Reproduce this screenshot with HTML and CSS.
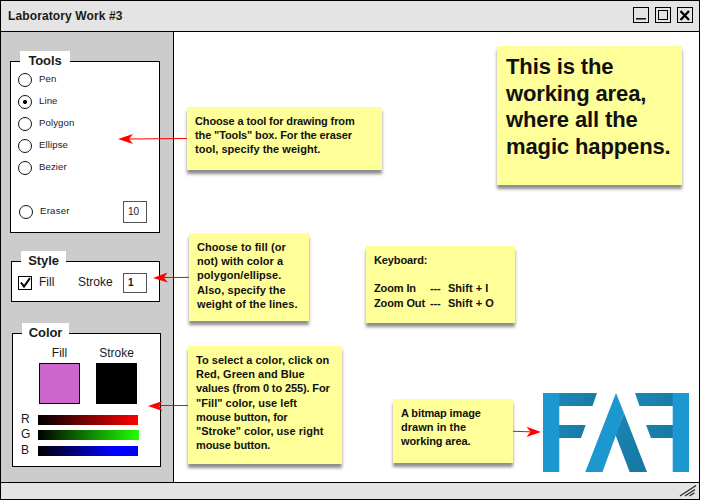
FILE: index.html
```html
<!DOCTYPE html>
<html lang="en">
<head>
<meta charset="utf-8">
<title>Laboratory Work #3</title>
<link rel="stylesheet" href="styles.css">
</head>
<body>
<div class="window">
  <header class="titlebar">
    <h1 class="title">Laboratory Work #3</h1>
    <div class="controls">
      <svg width="16" height="16" viewBox="0 0 16 16"><rect class="frame" x=".5" y=".5" width="15" height="15"/><path class="thick" d="M3 11.800h10"/></svg>
      <svg width="16" height="16" viewBox="0 0 16 16"><rect class="frame" x=".5" y=".5" width="15" height="15"/><rect class="frame" x="3.5" y="3.5" width="9" height="9"/></svg>
      <svg width="16" height="16" viewBox="0 0 16 16"><rect class="frame" x=".5" y=".5" width="15" height="15"/><path class="cross" d="M3.500 4l8.500 9M12 4l-8.500 9"/></svg>
    </div>
  </header>
  <div class="body">
    <aside class="sidebar">
      <section class="panel tools">
        <h2 class="legend">Tools</h2>
        <div class="row"><span class="radio"></span><span class="label">Pen</span></div>
        <div class="row"><span class="radio on"></span><span class="label">Line</span></div>
        <div class="row"><span class="radio"></span><span class="label">Polygon</span></div>
        <div class="row"><span class="radio"></span><span class="label">Ellipse</span></div>
        <div class="row"><span class="radio"></span><span class="label">Bezier</span></div>
        <div class="row eraser"><span class="radio"></span><span class="label">Eraser</span><span class="field">10</span></div>
      </section>
      <section class="panel style">
        <h2 class="legend">Style</h2>
        <div class="style-row">
          <svg class="check" width="14" height="14" viewBox="0 0 14 14"><rect class="frame" x=".5" y=".5" width="13" height="13"/><path d="M3 6.500L6 10.500L12 2.200" fill="none" stroke="#000" stroke-width="2"/></svg>
          <span class="fill-label">Fill</span>
          <span class="stroke-label">Stroke</span>
          <span class="field short">1</span>
        </div>
      </section>
      <section class="panel color">
        <h2 class="legend">Color</h2>
        <div class="swatches">
          <div class="swatch-col"><span>Fill</span><i class="swatch pink"></i></div>
          <div class="swatch-col"><span>Stroke</span><i class="swatch black"></i></div>
        </div>
        <div class="channel red"><span>R</span><i></i></div>
        <div class="channel green"><span>G</span><i></i></div>
        <div class="channel blue"><span>B</span><i></i></div>
      </section>
    </aside>
    <main class="canvas"></main>
  </div>
  <footer class="statusbar">
    <svg width="18" height="12" viewBox="0 0 18 12"><path d="M1 11L17 .5M6 11L16 4.500M10.500 11L15.500 7.800" fill="none" stroke="#222" stroke-width="1.200"/></svg>
  </footer>

  <div class="note big">This is the<br>working area,<br>where all the<br>magic happens.</div>
  <div class="note n-tools">Choose a tool for drawing from<br>the "Tools" box. For the eraser<br><span class="loose">tool, specify the weight.</span></div>
  <div class="note n-style">Choose to fill (or<br>not) with color a<br>polygon/ellipse.<br>Also, specify the<br>weight of the lines.</div>
  <div class="note n-keys">Keyboard:<br><br>
    <div class="keys"><span>Zoom In</span><span>---</span><span class="loose">Shift + I</span><span>Zoom Out</span><span>---</span><span class="loose">Shift + O</span></div>
  </div>
  <div class="note n-color"><span class="loose">To select a color, click on</span><br><span class="loose">Red, Green and Blue</span><br>values (from 0 to 255). For<br><span class="loose">"Fill" color, use left</span><br>mouse button, for<br><span class="loose">"Stroke" color, use right</span><br>mouse button.</div>
  <div class="note n-image">A bitmap image<br><span class="loose">drawn in the</span><br>working area.</div>

  <svg class="overlay" width="700" height="500" viewBox="0 0 700 500">
    <defs>
      <linearGradient id="bar" x1="0" y1="0" x2="1" y2="0.400"><stop offset="0" stop-color="#1b86b8"/><stop offset="1" stop-color="#187aa6"/></linearGradient>
      <linearGradient id="leg" x1="0" y1="0" x2="0.500" y2="1"><stop offset="0" stop-color="#1b86b6"/><stop offset="1" stop-color="#1878a4"/></linearGradient>
    </defs>
    <g stroke="#f00" stroke-width="1">
      <path d="M128 139L187 138.500M163 277.500L189 277.400M158 405.500L188 405.500M513 431.300L530 431.800"/>
    </g>
    <g fill="#f00">
      <path d="M118 139L133 134L129 139L133 144Z"/>
      <path d="M153 278L167.500 272.500L164 277.700L168 282.500Z"/>
      <path d="M148 406L162.500 401L159 405.700L162.500 411Z"/>
      <path d="M541 432L526.500 426.700L530.500 431.800L526.500 437Z"/>
    </g>
    <g>
      <path fill="url(#bar)" d="M559 393H597L592.500 406H559ZM559 425H585.700L581 438H559Z"/>
      <path fill="url(#bar)" d="M635 393H673V406H639.500ZM646 425H673V438H651Z"/>
      <path fill="url(#leg)" d="M624 413L647 472H629.700L615.500 435Z"/>
      <path fill="#1d97cf" d="M543 393H559.300V472H543ZM672.700 393H689V472H672.700ZM616 393L624 413L602.500 472H585.300Z"/>
    </g>
  </svg>
</div>
</body>
</html>
```
FILE: styles.css
```css
* { box-sizing: border-box; }
body {
  margin: 0;
  background: #fff;
  color: #1a1a1a;
  font-family: "Liberation Sans", Arial, sans-serif;
  overflow: hidden;
}
h1, h2 { margin: 0; }
svg { display: block; }

.window {
  position: relative;
  display: flex;
  flex-direction: column;
  width: 700px;
  height: 500px;
  border: 1px solid #000;
}
.titlebar {
  display: flex;
  justify-content: space-between;
  height: 31px;
  flex: none;
  padding: 6px 6px 0 7px;
  background: #e4e4e4;
  border-bottom: 1px solid #000;
}
.title { font-size: 12px; line-height: 18px; letter-spacing: .12px; }
.controls { display: flex; gap: 6px; }
.frame { fill: none; stroke: #000; }
.thick { stroke: #000; stroke-width: 1.4; }
.cross { stroke: #000; stroke-width: 2.3; }

.body { display: flex; flex: 1; min-height: 0; }
.sidebar {
  width: 173px;
  background: #ccc;
  border-right: 1px solid #000;
  padding-top: 29px;
}
.canvas { flex: 1; }
.statusbar {
  display: flex;
  justify-content: flex-end;
  height: 17px;
  flex: none;
  padding: 2px 2px 0 0;
  background: #e4e4e4;
  border-top: 1px solid #000;
}

.panel { border: 1px solid #000; background: #fff; width: 149px; }
.tools { width: 150px; height: 172px; margin-left: 9px; }
.style { height: 41px; margin: 28px 0 0 10px; }
.color { height: 134px; margin: 31px 0 0 11px; }
.legend {
  width: 50px;
  height: 16px;
  margin: -11px 0 2px 9px;
  background: #fff;
  font-size: 13px;
  line-height: 19px;
  text-align: center;
  letter-spacing: -.1px;
}
.style .legend { width: 45px; }
.color .legend { width: 47px; }

.row { display: flex; align-items: center; height: 22px; padding-left: 7px; }
.radio {
  width: 14px;
  height: 14px;
  border: 1.3px solid #111;
  border-radius: 50%;
}
.radio.on { background: radial-gradient(circle, #000 1.6px, transparent 2.4px); }
.label {
  width: 83px;
  margin: -3px 0 0 7px;
  font-size: 9.6px;
  line-height: 14px;
  letter-spacing: .1px;
}
.eraser { margin-top: 22px; padding-left: 8px; }
.eraser .label { letter-spacing: .25px; }
.field {
  width: 24px;
  height: 22px;
  border: 1px solid #555;
  padding-left: 4px;
  font-size: 10px;
  line-height: 19px;
}

.style-row { display: flex; align-items: center; height: 20px; margin-top: 6px; padding-left: 6px; font-size: 12px; }
.style-row span { line-height: 18px; }
.fill-label, .stroke-label { margin-top: -2px; }
.fill-label { width: 39px; margin-left: 7px; }
.stroke-label { width: 45px; }
.style-row .short { height: 20px; font-weight: bold; }

.swatches { display: flex; gap: 16px; padding-left: 26px; margin-top: 7px; }
.swatch-col { width: 41px; display: flex; flex-direction: column; align-items: center; font-size: 12px; line-height: 14px; }
.swatch { width: 41px; height: 41px; border: 1px solid #000; margin-top: 3px; }
.pink { background: #c6c; }
.black { background: #000; }
.channel { display: flex; align-items: center; height: 10px; padding-left: 8px; font-size: 12px; }
.channel span { width: 17px; line-height: 10px; margin-top: -2px; }
.channel i { width: 100px; height: 10px; }
.red { margin-top: 11px; }
.green { margin-top: 5px; }
.blue { margin-top: 6px; }
.red i { background: linear-gradient(90deg, #000, #f00); }
.green i { width: 101px; background: linear-gradient(90deg, #000, #2f0); }
.blue i { background: linear-gradient(90deg, #000, #00f 75%); }

.note {
  position: absolute;
  padding: 7px 0 0 8px;
  background: #ff9;
  box-shadow: 0 4px 3px rgba(0, 0, 0, .45);
  color: #111;
  font-size: 11px;
  font-weight: bold;
  letter-spacing: -.12px;
  line-height: 14.2px;
  white-space: nowrap;
}
.loose { letter-spacing: .03px; }
.big { left: 496px; top: 45px; width: 185px; height: 139px; padding: 8px 0 0 9px; font-size: 22px; line-height: 26.7px; letter-spacing: -.12px; }
.n-tools { left: 186px; top: 106px; width: 195px; height: 63px; }
.n-style { left: 188px; top: 232px; width: 120px; height: 88px; letter-spacing: .08px; }
.n-keys { left: 365px; top: 245px; width: 149px; height: 77px; }
.n-color { left: 187px; top: 345px; width: 154px; height: 118px; }
.n-image { left: 392px; top: 398px; width: 120px; height: 64px; }
.keys { display: grid; grid-template-columns: 56px 18px auto; }

.overlay { position: absolute; left: -1px; top: -1px; }
```
